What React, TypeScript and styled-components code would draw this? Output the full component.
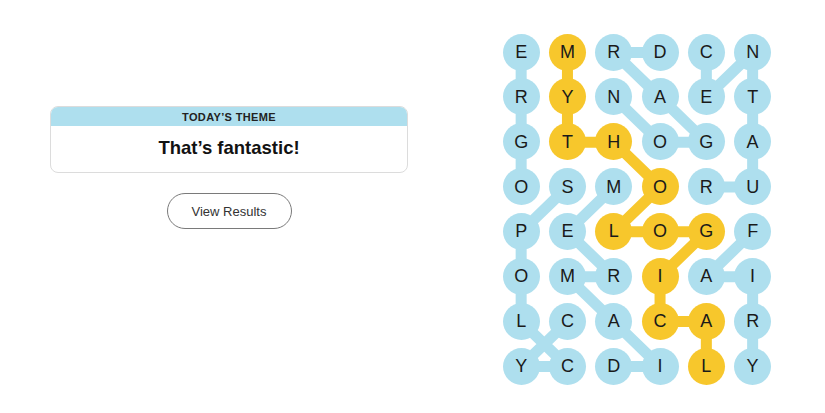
import React from "react";
import styled, { createGlobalStyle } from "styled-components";

const GlobalStyle = createGlobalStyle`
  html, body { margin: 0; padding: 0; background: #ffffff; }
  body { font-family: "Liberation Sans", Arial, sans-serif; color: #121212; }
`;

const BLUE = "#aedfee";
const YELLOW = "#f7c72c";
const PITCH_X = 46.3;
const PITCH_Y = 44.86;
const DOT = 37;

const LETTERS = [
  "EMRDCN",
  "RYNAET",
  "GTHOGA",
  "OSMORU",
  "PELOGF",
  "OMRIAI",
  "LCACAR",
  "YCDILY",
];

type Pt = [number, number];

const SPANGRAM: Pt[] = [
  [0, 1], [1, 1], [2, 1], [2, 2], [3, 3], [4, 2], [4, 3], [4, 4], [5, 3], [6, 3], [6, 4], [7, 4],
];

const WORDS: Pt[][] = [
  [[3, 0], [2, 0], [1, 0], [0, 0]],
  [[0, 4], [1, 4], [0, 5], [1, 5], [2, 5], [3, 5], [3, 4]],
  [[0, 3], [0, 2], [1, 3], [2, 4], [2, 3], [1, 2]],
  [[4, 5], [5, 4], [5, 5], [6, 5], [7, 5]],
  [[3, 2], [4, 1], [5, 2], [5, 1], [6, 2], [7, 3], [7, 2]],
  [[6, 1], [7, 0], [7, 1], [6, 0], [5, 0], [4, 0], [3, 1]],
];

const Page = styled.main`
  display: flex;
  align-items: flex-start;
  width: 825px;
  height: 413px;
  padding-left: 50px;
  box-sizing: border-box;
`;

const LeftColumn = styled.section`
  width: 358px;
  padding-top: 106px;
  display: flex;
  flex-direction: column;
  align-items: center;
`;

const ThemeCard = styled.div`
  width: 100%;
  height: 67px;
  box-sizing: border-box;
  border: 1px solid #dcdcdc;
  border-radius: 8px;
  overflow: hidden;
  display: flex;
  flex-direction: column;
`;

const ThemeHeader = styled.div`
  height: 19px;
  background: ${BLUE};
  display: flex;
  align-items: center;
  justify-content: center;
  font-size: 11px;
  font-weight: 700;
  letter-spacing: 0.35px;
  color: #222;
`;

const ThemeTitle = styled.div`
  flex: 1;
  display: flex;
  align-items: center;
  justify-content: center;
  font-size: 18.5px;
  font-weight: 700;
  color: #121212;
  padding-bottom: 2px;
`;

const ResultsButton = styled.button`
  margin-top: 20px;
  width: 125px;
  height: 36px;
  border: 1px solid #7a7a7a;
  border-radius: 18px;
  background: #fff;
  font-family: "Liberation Sans", Arial, sans-serif;
  font-size: 13px;
  color: #333;
  cursor: pointer;
`;

const Board = styled.div`
  position: relative;
  margin-left: 90px;
  margin-top: 29.6px;
  display: grid;
  grid-template-columns: repeat(6, ${PITCH_X}px);
  grid-template-rows: repeat(8, ${PITCH_Y}px);
`;

const Connectors = styled.svg`
  position: absolute;
  left: 0;
  top: 0;
  width: ${PITCH_X * 6}px;
  height: ${PITCH_Y * 8}px;
  pointer-events: none;
`;

const Cell = styled.div`
  display: flex;
  align-items: center;
  justify-content: center;
  position: relative;
`;

const Dot = styled.span<{ $tone: "blue" | "yellow" }>`
  width: ${DOT}px;
  height: ${DOT}px;
  border-radius: 50%;
  background: ${(p) => (p.$tone === "yellow" ? YELLOW : BLUE)};
  display: flex;
  align-items: center;
  justify-content: center;
  font-family: "Liberation Sans", Arial, sans-serif;
  font-size: 18px;
  color: #1a1a1a;
  line-height: 1;
`;

const cx = (c: number) => PITCH_X / 2 + c * PITCH_X;
const cy = (r: number) => PITCH_Y / 2 + r * PITCH_Y;

const pathD = (pts: Pt[]) =>
  pts.map(([r, c], i) => `${i === 0 ? "M" : "L"}${cx(c).toFixed(2)} ${cy(r).toFixed(2)}`).join(" ");

export default function App() {
  const spanSet = new Set(SPANGRAM.map(([r, c]) => `${r}-${c}`));
  return (
    <>
      <GlobalStyle />
      <Page>
        <LeftColumn>
          <ThemeCard>
            <ThemeHeader>TODAY’S THEME</ThemeHeader>
            <ThemeTitle>That’s fantastic!</ThemeTitle>
          </ThemeCard>
          <ResultsButton>View Results</ResultsButton>
        </LeftColumn>
        <Board>
          <Connectors viewBox={`0 0 ${PITCH_X * 6} ${PITCH_Y * 8}`}>
            {WORDS.map((w, i) => (
              <path key={i} d={pathD(w)} stroke={BLUE} strokeWidth={11} fill="none" strokeLinejoin="round" />
            ))}
            <path d={pathD(SPANGRAM)} stroke={YELLOW} strokeWidth={11} fill="none" strokeLinejoin="round" />
          </Connectors>
          {LETTERS.map((row, r) =>
            row.split("").map((ch, c) => (
              <Cell key={`${r}-${c}`}>
                <Dot $tone={spanSet.has(`${r}-${c}`) ? "yellow" : "blue"}>{ch}</Dot>
              </Cell>
            ))
          )}
        </Board>
      </Page>
    </>
  );
}
